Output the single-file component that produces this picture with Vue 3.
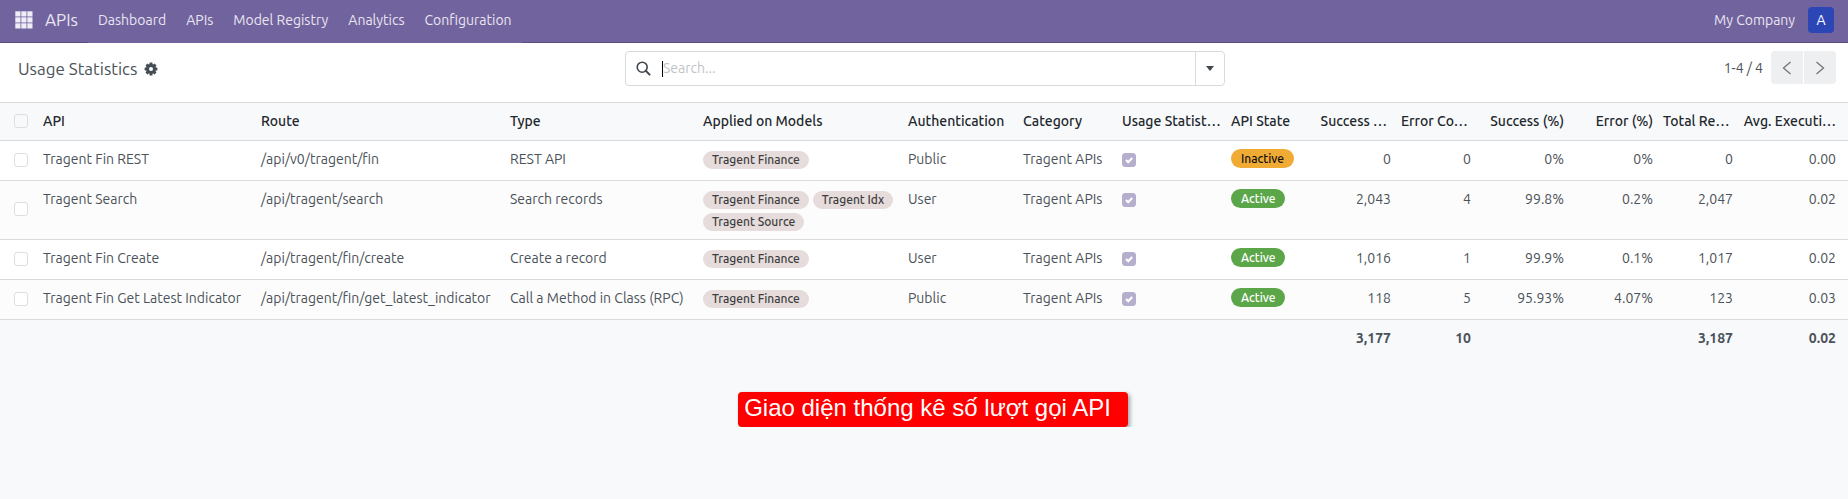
<script setup>
const menu = ['Dashboard', 'APIs', 'Model Registry', 'Analytics', 'Configuration']

const columns = [
  { label: 'API', width: 218 },
  { label: 'Route', width: 249 },
  { label: 'Type', width: 193 },
  { label: 'Applied on Models', width: 205 },
  { label: 'Authentication', width: 115 },
  { label: 'Category', width: 99 },
  { label: 'Usage Statist…', width: 109 },
  { label: 'API State', width: 89 },
  { label: 'Success …', width: 81, num: true, cut: true },
  { label: 'Error Co…', width: 80, num: true, cut: true },
  { label: 'Success (%)', width: 93, num: true },
  { label: 'Error (%)', width: 89, num: true },
  { label: 'Total Re…', width: 80, num: true, cut: true },
  { label: 'Avg. Executi…', width: 110, num: true },
]

const rows = [
  { name: 'Tragent Fin REST', route: '/api/v0/tragent/fin', type: 'REST API', tags: ['Tragent Finance'], auth: 'Public', state: 'Inactive', values: ['0', '0', '0%', '0%', '0', '0.00'] },
  { name: 'Tragent Search', route: '/api/tragent/search', type: 'Search records', tags: ['Tragent Finance', 'Tragent Idx', 'Tragent Source'], auth: 'User', state: 'Active', values: ['2,043', '4', '99.8%', '0.2%', '2,047', '0.02'] },
  { name: 'Tragent Fin Create', route: '/api/tragent/fin/create', type: 'Create a record', tags: ['Tragent Finance'], auth: 'User', state: 'Active', values: ['1,016', '1', '99.9%', '0.1%', '1,017', '0.02'] },
  { name: 'Tragent Fin Get Latest Indicator', route: '/api/tragent/fin/get_latest_indicator', type: 'Call a Method in Class (RPC)', tags: ['Tragent Finance'], auth: 'Public', state: 'Active', values: ['118', '5', '95.93%', '4.07%', '123', '0.03'] },
]

const totals = ['3,177', '10', '', '', '3,187', '0.02']
</script>

<template>
  <div class="page">
    <header class="navbar">
      <button class="apps" type="button" aria-label="Applications">
        <svg width="18" height="18" viewBox="0 0 18 18" fill="#f0edf6">
          <template v-for="r in 3" :key="r">
            <rect v-for="c in 3" :key="c" :x="(c - 1) * 6 + 0.3" :y="(r - 1) * 6 + 0.3" width="5.2" height="5.2" />
          </template>
        </svg>
      </button>
      <a class="brand" href="#">APIs</a>
      <nav class="menu">
        <a v-for="item in menu" :key="item" href="#">{{ item }}</a>
      </nav>
      <span class="company">My Company</span>
      <button class="avatar" type="button" aria-label="User menu">A</button>
    </header>

    <section class="control">
      <div class="heading">
        <h1>Usage Statistics</h1>
        <button class="gear" type="button" aria-label="Actions">
          <svg width="14" height="14" viewBox="-7 -7 14 14">
            <g fill="#454c54">
              <rect v-for="n in 4" :key="n" x="-1.5" y="-6.4" width="3" height="12.8" rx="0.5" :transform="`rotate(${n * 45})`" />
              <circle r="4.9" />
            </g>
            <circle r="2" fill="#fff" />
          </svg>
        </button>
      </div>
      <div class="search">
        <svg class="glass" width="15" height="15" viewBox="0 0 15 15" fill="none" stroke="#41484f">
          <circle cx="6.2" cy="6.2" r="5" stroke-width="1.6" />
          <path d="M9.8 9.8 L13.6 13.6" stroke-width="2" stroke-linecap="round" />
        </svg>
        <span class="caret"></span>
        <input type="text" placeholder="Search..." aria-label="Search" />
        <button class="toggle" type="button" aria-label="Search options">
          <svg width="8" height="5" viewBox="0 0 8 5"><path d="M0 0H8L4 5Z" fill="#41484f" /></svg>
        </button>
      </div>
      <div class="pager">
        <span>1-4 / 4</span>
        <div class="steps">
          <button type="button" aria-label="Previous">
            <svg width="10" height="14" viewBox="0 0 10 14"><path d="M8.5 1 L1.5 7 L8.5 13" /></svg>
          </button>
          <button type="button" aria-label="Next">
            <svg width="10" height="14" viewBox="0 0 10 14"><path d="M1.5 1 L8.5 7 L1.5 13" /></svg>
          </button>
        </div>
      </div>
    </section>

    <table>
      <colgroup>
        <col style="width: 38px" />
        <col v-for="c in columns" :key="c.label" :style="{ width: c.width + 'px' }" />
      </colgroup>
      <thead>
        <tr>
          <th class="pick"><input type="checkbox" aria-label="Select all" /></th>
          <th v-for="c in columns" :key="c.label" scope="col" :class="{ num: c.num, cut: c.cut }">{{ c.label }}</th>
        </tr>
      </thead>
      <tbody>
        <tr v-for="row in rows" :key="row.name">
          <td class="pick"><input type="checkbox" :aria-label="'Select ' + row.name" /></td>
          <td>{{ row.name }}</td>
          <td>{{ row.route }}</td>
          <td>{{ row.type }}</td>
          <td class="tagcell">
            <div class="tags"><span v-for="t in row.tags" :key="t" class="tag">{{ t }}</span></div>
          </td>
          <td>{{ row.auth }}</td>
          <td>Tragent APIs</td>
          <td class="usage"><input type="checkbox" checked disabled aria-label="Usage statistics" /></td>
          <td class="statecell"><span class="state" :class="row.state.toLowerCase()">{{ row.state }}</span></td>
          <td v-for="(v, i) in row.values" :key="i" class="num">{{ v }}</td>
        </tr>
      </tbody>
      <tfoot>
        <tr>
          <td colspan="9"></td>
          <td v-for="(v, i) in totals" :key="i" class="num">{{ v }}</td>
        </tr>
      </tfoot>
    </table>

    <div class="note"><p>Giao diện thống kê số lượt gọi API</p></div>
  </div>
</template>

<style>
body {
  background: #f8f9fb;
}
</style>

<style scoped>
.page {
  font-family: Ubuntu, "Noto Sans", "Open Sans", sans-serif;
  font-size: 14px;
  line-height: 20px;
  color: #4b5259;
}
button {
  font: inherit;
  border: 0;
  padding: 0;
  background: none;
  display: flex;
  align-items: center;
  justify-content: center;
}
a {
  color: inherit;
  text-decoration: none;
}
.navbar {
  display: flex;
  align-items: stretch;
  height: 42px;
  padding: 0 14px 0 15px;
  background: #71639e;
  border-bottom: 1px solid #5a4f7f;
  color: #e9e6f1;
}
.navbar > * {
  display: flex;
  align-items: center;
  padding-bottom: 3px;
}
.brand {
  padding-left: 12px;
  padding-right: 10px;
  font-size: 17px;
}
.menu {
  background: #71639e;
  margin-bottom: -1px;
}
.menu a {
  padding: 0 10px;
}
.company {
  margin-left: auto;
  margin-right: 13px;
}
.navbar > .avatar {
  width: 26px;
  height: 26px;
  align-self: flex-start;
  margin-top: 7px;
  padding: 0;
  border-radius: 4px;
  background: #2c46b6;
  color: #fff;
}
.control {
  display: grid;
  grid-template-columns: 1fr 600px 1fr;
  align-items: start;
  padding: 8px 12px 16px 14px;
  background: #fff;
}
.heading {
  display: flex;
  align-items: center;
  gap: 7px;
  height: 35px;
  padding-left: 4px;
}
h1 {
  margin: 0;
  font-size: 17px;
  font-weight: 400;
}
.search {
  display: flex;
  align-items: center;
  height: 35px;
  box-sizing: border-box;
  border: 1px solid #d8dadd;
  border-radius: 4px;
}
.glass {
  margin: 0 11px 0 10px;
}
.caret {
  width: 1px;
  height: 16px;
  background: #000;
}
.search input {
  flex: 1;
  min-width: 0;
  border: 0;
  outline: 0;
  padding: 0 0 2px;
  font: inherit;
  background: none;
}
.search input::placeholder {
  color: #bfc3c8;
}
.toggle {
  align-self: stretch;
  width: 29px;
  border-left: 1px solid #d8dadd;
}
.pager {
  display: flex;
  justify-content: flex-end;
  align-items: center;
  gap: 8px;
}
.steps {
  display: flex;
  gap: 1px;
}
.steps button {
  width: 32px;
  height: 33px;
  background: #eeeff1;
  border-radius: 4px 0 0 4px;
}
.steps button:last-child {
  border-radius: 0 4px 4px 0;
}
.steps path {
  fill: none;
  stroke: #6f757b;
  stroke-width: 1.3;
}
table {
  width: 100%;
  table-layout: fixed;
  border-collapse: separate;
  border-spacing: 0;
  border-top: 1px solid #d8dadd;
}
th,
td {
  box-sizing: border-box;
  padding: 8px 5px 11px;
  text-align: left;
  vertical-align: top;
  white-space: nowrap;
  border-bottom: 1px solid #d8dadd;
}
th {
  padding: 8px 5px 9px;
  font-weight: 500;
  color: #22272c;
}
.num {
  text-align: right;
}
.cut {
  padding-right: 9px;
}
.num:last-child {
  padding-right: 12px;
}
.pick {
  padding: 0 0 2px 14px;
  vertical-align: middle;
}
input[type="checkbox"] {
  display: block;
  appearance: none;
  width: 14px;
  height: 14px;
  margin: 0;
  border: 1px solid #dcdee1;
  border-radius: 3px;
  background: #fff;
}
thead input[type="checkbox"] {
  background: transparent;
}
input[type="checkbox"]:checked {
  border-color: #b6aecd;
  background: #b6aecd url("data:image/svg+xml,%3Csvg xmlns='http://www.w3.org/2000/svg' viewBox='0 0 12 12'%3E%3Cpath d='M3 6l2.2 2.2L9.2 4' fill='none' stroke='white' stroke-width='2'/%3E%3C/svg%3E") center / 12px 12px;
}
tbody tr {
  background: #fff;
}
tbody tr:nth-child(even) {
  background: #fcfcfc;
}
.usage {
  padding-top: 12px;
}
.tagcell {
  padding: 10px 5px 8px;
}
.tags {
  display: flex;
  flex-wrap: wrap;
  gap: 4px;
}
.tag,
.state {
  display: block;
  border-radius: 10px;
  font-size: 12px;
  font-weight: 500;
}
.tag {
  padding: 0 9px;
  line-height: 18px;
  background: #e6dcdc;
  color: #3e3e40;
}
.statecell {
  padding-top: 8px;
}
.state {
  width: fit-content;
  padding: 0 10px;
  line-height: 19px;
}
.inactive {
  background: #f0ab35;
  color: #111;
}
.active {
  background: #5ba648;
  color: #fff;
}
tfoot td {
  border: 0;
  font-weight: 700;
}
.note {
  display: flex;
  justify-content: center;
  padding: 33px 0 0 18px;
}
.note p {
  margin: 0;
  padding: 0 17px 4px 6px;
  border-radius: 4px;
  background: #f00;
  color: #fff;
  font: 24px/31px "Liberation Sans", Arial, sans-serif;
  box-shadow: 2px 2px 4px rgba(0, 0, 0, 0.35);
}
</style>
